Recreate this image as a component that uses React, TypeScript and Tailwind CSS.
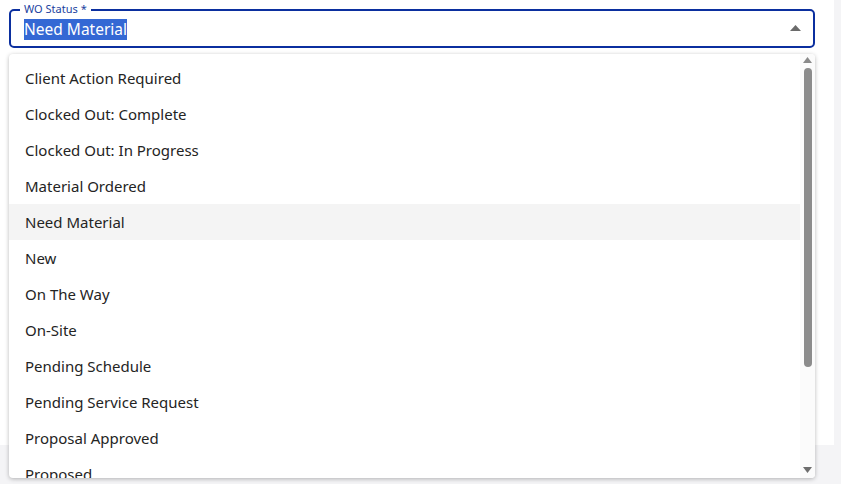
import React from "react";

const items = [
  "Client Action Required",
  "Clocked Out: Complete",
  "Clocked Out: In Progress",
  "Material Ordered",
  "Need Material",
  "New",
  "On The Way",
  "On-Site",
  "Pending Schedule",
  "Pending Service Request",
  "Proposal Approved",
  "Proposed",
];

export default function App() {
  return (
    <div
      className="relative h-[484px] w-[841px] overflow-hidden bg-[#f4f4f6]"
      style={{ fontFamily: '"Segoe UI", "Noto Sans", "Open Sans", sans-serif' }}
    >
      <div className="h-[445px] w-[834px] bg-white pt-[9px] pl-[9px]">
        <div className="relative h-[39px] w-[806px] rounded-[5px] border-2 border-[#0b2f9f]">
          <div className="absolute -top-[9px] left-[9px] bg-white px-[4px] text-[11px] leading-[14px] text-[#1b3fa0]">
            WO Status *
          </div>
          <div className="flex h-full items-center justify-between pl-[13px] pr-[12px]">
            <span className="mt-[1px] bg-[#3468d4] text-[15.5px] leading-[21px] text-white">Need Material</span>
            <svg width="11" height="6" viewBox="0 0 11 6" className="mb-[1px]">
              <polygon points="0,6 5.5,0 11,6" fill="#6b6b6b" />
            </svg>
          </div>
        </div>
      </div>

      <div className="absolute left-[9px] top-[54px] flex h-[424px] w-[806px] overflow-hidden rounded-[4px] bg-white shadow-[0_1px_4px_rgba(0,0,0,0.28)]">
        <div className="flex-1 overflow-hidden pt-[6px]">
          {items.map((t) => (
            <div
              key={t}
              className={`flex h-[36px] items-center pl-[16px] text-[15px] text-[#242424] ${
                t === "Need Material" ? "bg-[#f4f4f4]" : ""
              }`}
            >
              {t}
            </div>
          ))}
        </div>
        <div className="flex w-[15px] flex-col items-center bg-[#fbfbfb]">
          <svg width="9" height="6" viewBox="0 0 9 6" className="mt-[3px]">
            <polygon points="0,6 4.5,0 9,6" fill="#8a8a8a" />
          </svg>
          <div className="mt-[5px] h-[299px] w-[8px] rounded-full bg-[#8c8c8c]" />
          <div className="flex-1" />
          <svg width="9" height="6" viewBox="0 0 9 6" className="mb-[5px]">
            <polygon points="0,0 9,0 4.5,6" fill="#6e6e6e" />
          </svg>
        </div>
      </div>
    </div>
  );
}
